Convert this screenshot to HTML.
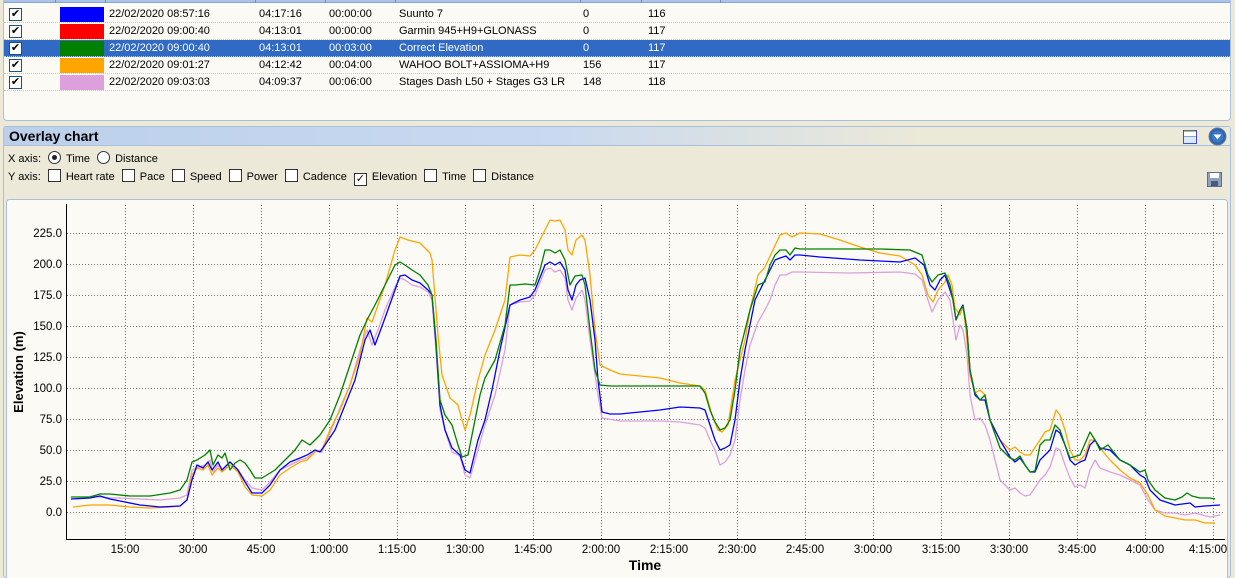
<!DOCTYPE html>
<html><head><meta charset="utf-8"><style>
*{margin:0;padding:0;box-sizing:border-box}
body{width:1235px;height:578px;overflow:hidden;background:#ece9d8;font-family:"Liberation Sans",Arial,sans-serif;font-size:11px;color:#000;position:relative}
.abs{position:absolute}
.tbl{left:3px;top:-4px;width:1228px;height:125px;background:#fbfaf5;border:1px solid #a9bfdc;border-radius:4px;overflow:hidden}
.hdr{left:0;top:0;width:1235px;height:6px;background:#a9c3ea;border-bottom:1px solid #8aa6d0}
.sep{top:0;width:1px;height:6px;background:#6f8fc0}
.row{left:4px;width:1226px;height:17px;border-bottom:1px dotted #c8c8c8}
.row span{position:absolute;top:2px;white-space:nowrap}
.cb{position:absolute;left:5px;top:2px;width:13px;height:13px;border:1px solid #1c5180;background:#fff;font-size:11px;line-height:11px;text-align:center;color:#000}
.sw{position:absolute;left:56px;top:1px;width:44px;height:15px}
.sel{background:#316ac5;color:#fff}
.lbl{white-space:nowrap}
.box{display:inline-block;width:13px;height:13px;border:1px solid #333;background:#fff;vertical-align:-2px;margin:0 5px 0 7px;font-size:11px;line-height:11px;text-align:center}
.rad{display:inline-block;width:13px;height:13px;border:1px solid #333;border-radius:50%;background:#fff;vertical-align:-2px;margin:0 5px 0 7px;position:relative}
</style></head><body>
<div class="abs tbl">
 <div class="abs hdr" style="top:0"></div>
 <div class="abs sep" style="left:51px"></div><div class="abs sep" style="left:101px"></div><div class="abs sep" style="left:251px"></div><div class="abs sep" style="left:321px"></div><div class="abs sep" style="left:391px"></div><div class="abs sep" style="left:576px"></div><div class="abs sep" style="left:637px"></div><div class="abs sep" style="left:716px"></div>
</div>
<div class="abs row" style="top:6px"><div class="cb">✔</div><div class="sw" style="background:#0000ff"></div><span style="left:105px">22/02/2020 08:57:16</span><span style="left:255px">04:17:16</span><span style="left:325px">00:00:00</span><span style="left:395px">Suunto 7</span><span style="left:579px">0</span><span style="left:644px">116</span></div>
<div class="abs row" style="top:23px"><div class="cb">✔</div><div class="sw" style="background:#ff0000"></div><span style="left:105px">22/02/2020 09:00:40</span><span style="left:255px">04:13:01</span><span style="left:325px">00:00:00</span><span style="left:395px">Garmin 945+H9+GLONASS</span><span style="left:579px">0</span><span style="left:644px">117</span></div>
<div class="abs row sel" style="top:40px"><div class="cb">✔</div><div class="sw" style="background:#008000"></div><span style="left:105px">22/02/2020 09:00:40</span><span style="left:255px">04:13:01</span><span style="left:325px">00:03:00</span><span style="left:395px">Correct Elevation</span><span style="left:579px">0</span><span style="left:644px">117</span></div>
<div class="abs row" style="top:57px"><div class="cb">✔</div><div class="sw" style="background:#ffa500"></div><span style="left:105px">22/02/2020 09:01:27</span><span style="left:255px">04:12:42</span><span style="left:325px">00:04:00</span><span style="left:395px">WAHOO BOLT+ASSIOMA+H9</span><span style="left:579px">156</span><span style="left:644px">117</span></div>
<div class="abs row" style="top:74px"><div class="cb">✔</div><div class="sw" style="background:#dda0dd"></div><span style="left:105px">22/02/2020 09:03:03</span><span style="left:255px">04:09:37</span><span style="left:325px">00:06:00</span><span style="left:395px">Stages Dash L50 + Stages G3 LR</span><span style="left:579px">148</span><span style="left:644px">118</span></div>

<div class="abs" style="left:3px;top:126px;width:1228px;height:452px;border:1px solid #a9bfdc;border-radius:3px;background:#ece9d8"></div>
<div class="abs" style="left:4px;top:127px;width:1226px;height:19px;background:linear-gradient(to right,#bcd0ec,#c9d9ef 45%,#ece9d8 75%);border-bottom:1px solid #a9bfdc"></div>
<div class="abs lbl" style="left:9px;top:128px;font-size:14px;font-weight:bold">Overlay chart</div>
<svg class="abs" style="left:1182px;top:129px" width="16" height="16"><rect x="1.5" y="1.5" width="13" height="13" fill="#d6ecf8" stroke="#4a4ad0"/><line x1="2" y1="2" x2="14" y2="2" stroke="#7a9a40"/><line x1="2" y1="7" x2="14" y2="7" stroke="#4a4ad0"/><rect x="2" y="3" width="12" height="4" fill="#fff"/></svg>
<svg class="abs" style="left:1208px;top:127px" width="19" height="19"><circle cx="9.5" cy="9.5" r="8.5" fill="#2f62a8" stroke="#6b7f99"/><circle cx="9.5" cy="9.5" r="6" fill="#3a78c8"/><path d="M5.5 7.5h8l-4 5z" fill="#fff"/></svg>
<div class="abs lbl" style="left:8px;top:151px">X axis:<span class="rad"><span style="position:absolute;left:3px;top:3px;width:5px;height:5px;border-radius:50%;background:#222"></span></span>Time<span class="rad"></span>Distance</div>
<div class="abs lbl" style="left:8px;top:169px">Y axis:<span class="box"></span>Heart rate<span class="box"></span>Pace<span class="box"></span>Speed<span class="box"></span>Power<span class="box"></span>Cadence<span class="box">✓</span>Elevation<span class="box"></span>Time<span class="box"></span>Distance</div>
<svg class="abs" style="left:1207px;top:172px" width="15" height="15"><rect x="0.5" y="0.5" width="14" height="14" fill="#8ea3c4" stroke="#5a6f94"/><rect x="3" y="1" width="9" height="5" fill="#fff"/><rect x="4" y="9" width="7" height="5" fill="#4a5a78"/></svg>

<svg class="abs" style="left:0;top:0" width="1235" height="578">
<rect x="6.5" y="199.5" width="1221" height="390" rx="3" fill="#fbfaf5" stroke="#a9bfdc"/>
<g stroke="#777" stroke-dasharray="1,2" stroke-width="1">
<path d="M67 233.5H1225M67 264.5H1225M67 295.5H1225M67 326.5H1225M67 357.5H1225M67 388.5H1225M67 419.5H1225M67 450.5H1225M67 481.5H1225M67 512.5H1225"/>
<path d="M125.5 205V539M193.5 205V539M261.5 205V539M329.5 205V539M397.5 205V539M465.5 205V539M533.5 205V539M601.5 205V539M669.5 205V539M737.5 205V539M805.5 205V539M873.5 205V539M941.5 205V539M1009.5 205V539M1077.5 205V539M1145.5 205V539M1213.5 205V539"/>
</g>
<path d="M66.5 204V539.5H1225" fill="none" stroke="#000"/>
<g font-family="Liberation Sans,Arial,sans-serif" font-size="11.5" text-anchor="end" fill="#000">
<text x="62" y="237">225.0</text><text x="62" y="268">200.0</text><text x="62" y="299">175.0</text><text x="62" y="330">150.0</text><text x="62" y="361">125.0</text><text x="62" y="392">100.0</text><text x="62" y="423">75.0</text><text x="62" y="454">50.0</text><text x="62" y="485">25.0</text><text x="62" y="516">0.0</text>
</g>
<g font-family="Liberation Sans,Arial,sans-serif" font-size="11.5" text-anchor="middle">
<text x="125" y="553">15:00</text><text x="193" y="553">30:00</text><text x="261" y="553">45:00</text><text x="329" y="553">1:00:00</text><text x="397" y="553">1:15:00</text><text x="465" y="553">1:30:00</text><text x="533" y="553">1:45:00</text><text x="601" y="553">2:00:00</text><text x="669" y="553">2:15:00</text><text x="737" y="553">2:30:00</text><text x="805" y="553">2:45:00</text><text x="873" y="553">3:00:00</text><text x="941" y="553">3:15:00</text><text x="1009" y="553">3:30:00</text><text x="1077" y="553">3:45:00</text><text x="1145" y="553">4:00:00</text><text x="1208" y="553">4:15:00</text>
<text x="645" y="570" font-size="14" font-weight="bold">Time</text>
<text transform="translate(23,372) rotate(-90)" font-size="13" font-weight="bold">Elevation (m)</text>
</g>
<g fill="none" stroke-width="1.3" stroke-linejoin="round">
<polyline stroke="#dda0dd" points="90,496 100,497 110,498 120,498 140,499 160,500 180,498 187,495 192,470 197,468 205,465 210,460 213,472 218,465 222,470 230,462 238,470 245,480 252,488 262,490 270,482 280,470 290,465 300,460 307,458 315,450 322,452 330,433 340,408 350,385 360,350 367,330 372,345 378,330 385,310 395,287 400,278 405,280 412,285 420,287 428,292 432,300 436,350 440,410 445,430 452,452 460,456 465,475 470,478 478,450 485,425 495,395 505,350 510,305 520,302 530,301 535,295 545,270 550,268 555,272 560,270 565,278 568,300 572,310 576,298 582,290 585,300 590,340 598,395 602,418 620,421 660,421 680,422 700,425 705,428 710,440 715,450 720,465 725,462 730,455 735,440 740,400 745,370 750,345 758,322 765,310 770,300 775,285 780,275 786,275 792,272 800,272 850,273 900,272 915,274 922,280 928,300 932,312 938,300 945,292 950,300 953,320 956,340 960,325 963,330 967,355 970,395 975,420 980,418 985,425 990,440 1000,480 1010,490 1015,488 1020,493 1025,496 1030,495 1040,480 1045,475 1050,467 1056,448 1060,450 1065,465 1070,478 1075,487 1080,485 1085,488 1090,470 1095,460 1100,468 1110,472 1120,475 1130,480 1140,485 1148,500 1155,510 1165,513 1175,513 1185,515 1195,513 1210,517 1220,515"/>
<polyline stroke="#ffa500" points="73,507 90,505 110,505 130,507 150,508 170,507 180,506 187,500 192,475 197,468 203,470 208,465 212,475 218,468 222,472 230,465 238,472 245,487 252,495 262,496 270,490 280,475 290,468 300,462 307,460 315,452 322,450 330,430 340,410 350,385 360,355 367,318 372,322 378,305 385,285 395,250 400,237 408,240 420,243 430,253 432,260 438,335 442,375 450,398 458,405 462,420 465,430 470,415 478,380 485,355 495,330 505,300 510,257 520,255 530,256 535,250 545,230 550,220 555,221 560,220 565,230 568,250 572,255 576,240 582,235 585,240 590,275 595,330 600,365 610,370 620,374 660,378 680,383 700,386 705,390 712,415 718,430 722,432 728,425 735,380 740,360 745,340 750,310 758,275 765,267 772,252 780,235 786,233 792,237 800,233 820,234 840,240 860,247 880,253 900,256 915,265 922,275 928,295 933,302 938,290 945,282 948,275 952,285 955,308 960,315 963,306 966,330 970,375 975,393 980,390 985,395 990,420 1000,440 1010,450 1015,447 1020,452 1025,455 1030,455 1040,440 1045,432 1050,430 1056,410 1060,415 1065,430 1070,450 1075,460 1080,460 1085,455 1090,440 1095,440 1100,448 1110,460 1120,470 1130,478 1140,483 1148,495 1155,510 1165,516 1175,518 1185,520 1195,520 1205,523 1215,523"/>
<polyline stroke="#0000ff" points="71,499 90,498 100,496 110,499 125,502 140,505 160,507 180,506 187,500 192,480 197,465 203,468 208,462 212,470 218,462 222,470 230,462 238,470 245,482 252,493 262,493 270,485 280,470 290,462 300,458 307,455 315,450 320,452 325,445 335,430 345,405 355,380 365,340 370,330 375,345 385,318 395,290 400,276 405,275 412,280 420,283 428,290 432,295 436,345 440,405 445,430 452,448 460,455 465,470 470,473 478,440 485,420 492,390 500,350 510,305 520,300 530,297 535,290 545,265 550,262 555,265 560,262 565,270 568,290 572,300 576,285 580,280 585,278 590,300 595,340 598,380 602,412 610,414 620,414 640,412 660,410 680,407 700,408 705,410 710,425 715,440 720,450 725,448 730,445 735,420 740,380 745,350 750,325 755,300 760,290 765,280 775,260 780,258 786,256 790,260 795,255 800,255 820,257 860,260 900,262 915,258 924,265 930,285 935,290 940,280 945,275 950,290 953,300 956,320 960,310 963,305 967,330 970,370 975,395 980,400 985,400 990,420 1000,440 1010,457 1015,462 1020,458 1025,465 1030,472 1035,472 1040,460 1045,455 1050,450 1056,430 1060,433 1065,445 1070,460 1075,465 1080,462 1085,460 1090,445 1095,440 1100,448 1110,450 1120,460 1130,465 1140,475 1145,478 1150,490 1160,500 1175,505 1190,503 1195,507 1205,506 1220,505"/>
<polyline stroke="#008000" points="71,497 90,497 100,494 110,494 130,496 150,496 170,493 180,490 187,480 192,462 197,460 205,455 210,450 213,465 218,455 222,458 225,453 230,470 235,463 240,460 245,463 250,470 255,478 262,478 275,470 285,460 295,450 302,440 310,445 320,435 330,420 340,395 350,365 360,335 368,318 375,305 385,285 395,265 400,262 405,265 412,270 420,275 428,285 432,295 436,340 440,400 445,415 452,425 458,445 462,457 468,455 475,420 480,395 485,378 495,360 505,325 510,285 515,285 525,284 535,285 540,270 545,250 550,250 555,253 560,250 565,260 570,285 575,276 582,275 585,285 590,330 595,370 600,385 610,386 640,386 680,386 700,386 705,393 710,410 715,422 720,430 725,428 730,420 735,390 740,350 745,330 750,310 758,285 765,282 770,265 775,255 780,250 786,250 790,255 795,248 800,249 850,249 880,249 910,250 922,255 928,275 932,282 938,275 945,273 950,285 953,300 956,320 960,310 963,306 967,330 970,370 975,393 980,400 985,395 990,420 1000,448 1010,458 1015,460 1020,456 1025,465 1030,472 1035,471 1040,445 1045,440 1050,440 1055,425 1060,430 1065,445 1070,458 1080,455 1090,432 1095,440 1100,450 1108,445 1120,460 1130,465 1140,472 1145,470 1148,480 1155,490 1165,498 1175,500 1182,497 1187,493 1192,496 1200,498 1210,498 1215,499"/>
</g>
</svg>
</body></html>
